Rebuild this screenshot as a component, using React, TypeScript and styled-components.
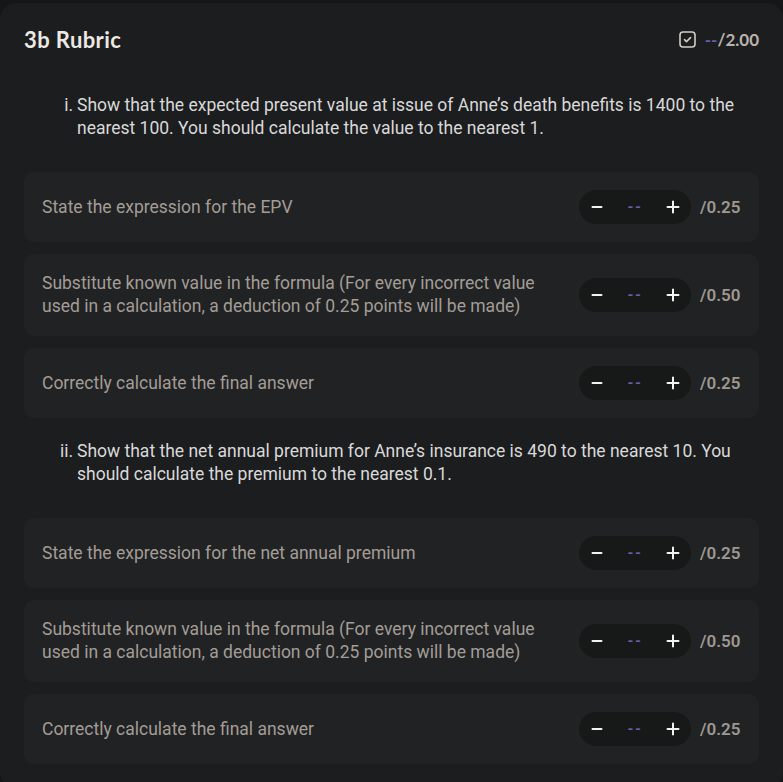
import { Fragment } from "react";
import styled, { createGlobalStyle } from "styled-components";

const GlobalStyle = createGlobalStyle`
  html, body {
    margin: 0;
    padding: 0;
    background: #151716;
  }
  body {
    font-family: Roboto, "Liberation Sans", sans-serif;
    -webkit-font-smoothing: antialiased;
  }
`;

type Criterion = { label: string; max: string };
type Part = { marker: string; question: string; criteria: Criterion[] };

const substitute =
  "Substitute known value in the formula (For every incorrect value used in a calculation, a deduction of 0.25 points will be made)";

const parts: Part[] = [
  {
    marker: "i.",
    question:
      "Show that the expected present value at issue of Anne\u2019s death benefits is 1400 to the nearest 100. You should calculate the value to the nearest 1.",
    criteria: [
      { label: "State the expression for the EPV", max: "0.25" },
      { label: substitute, max: "0.50" },
      { label: "Correctly calculate the final answer", max: "0.25" },
    ],
  },
  {
    marker: "ii.",
    question:
      "Show that the net annual premium for Anne\u2019s insurance is 490 to the nearest 10. You should calculate the premium to the nearest 0.1.",
    criteria: [
      { label: "State the expression for the net annual premium", max: "0.25" },
      { label: substitute, max: "0.50" },
      { label: "Correctly calculate the final answer", max: "0.25" },
    ],
  },
];

const Page = styled.div`
  padding-top: 3px;
`;

const Card = styled.section`
  background: #1c1d1f;
  border-radius: 16px;
  padding: 24px;
`;

const Header = styled.header`
  display: flex;
  align-items: center;
  justify-content: space-between;
  height: 24px;
  margin-bottom: 21px;
`;

const Title = styled.h2`
  margin: 0;
  font-family: Lato, "Noto Sans", sans-serif;
  font-weight: 700;
  font-size: 22px;
  color: #ece8e3;
  letter-spacing: 0.4px;
`;

const Total = styled.div`
  display: flex;
  align-items: center;
  gap: 9px;
  font-family: Lato, "Noto Sans", sans-serif;
  font-weight: 700;
  font-size: 17px;
  color: #b9b3ab;
`;

const Pending = styled.span`
  color: #6a5ca8;
`;

const Question = styled.div`
  display: flex;
  gap: 4px;
  padding: 22px 0 32px 34px;
  font-size: 17.5px;
  font-weight: 400;
  line-height: 23px;
  color: #d9d9d9;
`;

const Marker = styled.span`
  flex: 0 0 15px;
  text-align: right;
`;

const Rows = styled.div`
  display: flex;
  flex-direction: column;
  gap: 12px;
`;

const Row = styled.div`
  display: flex;
  align-items: center;
  gap: 24px;
  background: #212224;
  border-radius: 10px;
  padding: 18px;
`;

const Label = styled.div`
  flex: 1;
  font-size: 17.5px;
  font-weight: 400;
  line-height: 23px;
  color: #a39d96;
`;

const Controls = styled.div`
  display: flex;
  align-items: center;
  gap: 9px;
`;

const Stepper = styled.div`
  display: flex;
  align-items: center;
  justify-content: space-between;
  width: 112px;
  height: 34px;
  padding: 0 10px;
  box-sizing: border-box;
  background: #171918;
  border-radius: 17px;
`;

const StepButton = styled.button`
  display: flex;
  align-items: center;
  justify-content: center;
  width: 16px;
  height: 16px;
  padding: 0;
  border: none;
  background: none;
  color: #f2f2f2;
  cursor: pointer;
`;

const Value = styled.span`
  font-size: 15px;
  font-weight: 700;
  letter-spacing: 1.5px;
  color: #6a5ca8;
`;

const Max = styled.span`
  min-width: 41px;
  font-size: 17px;
  font-weight: 600;
  color: #9e9891;
`;

const Minus = () => (
  <svg width="12" height="12" viewBox="0 0 12 12">
    <path d="M1.5 6h9" stroke="currentColor" strokeWidth="2" strokeLinecap="round" />
  </svg>
);

const Plus = () => (
  <svg width="14" height="14" viewBox="0 0 14 14">
    <path d="M1.5 7h11M7 1.5v11" stroke="currentColor" strokeWidth="2" strokeLinecap="round" />
  </svg>
);

const CheckBox = () => (
  <svg width="17" height="17" viewBox="0 0 17 17" fill="none">
    <rect x="1" y="1" width="15" height="15" rx="3" stroke="#d2cdc7" strokeWidth="1.6" />
    <path
      d="M5.5 8.7l2 1.9 4-4"
      stroke="#d2cdc7"
      strokeWidth="1.6"
      strokeLinecap="round"
      strokeLinejoin="round"
    />
  </svg>
);

export default function App() {
  return (
    <Page>
      <GlobalStyle />
      <Card>
        <Header>
          <Title>3b Rubric</Title>
          <Total>
            <CheckBox />
            <span>
              <Pending>--</Pending>/2.00
            </span>
          </Total>
        </Header>
        {parts.map((part) => (
          <Fragment key={part.marker}>
            <Question>
              <Marker>{part.marker}</Marker>
              <span>{part.question}</span>
            </Question>
            <Rows>
              {part.criteria.map((c, i) => (
                <Row key={i}>
                  <Label>{c.label}</Label>
                  <Controls>
                    <Stepper>
                      <StepButton aria-label="decrease">
                        <Minus />
                      </StepButton>
                      <Value>--</Value>
                      <StepButton aria-label="increase">
                        <Plus />
                      </StepButton>
                    </Stepper>
                    <Max>/{c.max}</Max>
                  </Controls>
                </Row>
              ))}
            </Rows>
          </Fragment>
        ))}
      </Card>
    </Page>
  );
}
